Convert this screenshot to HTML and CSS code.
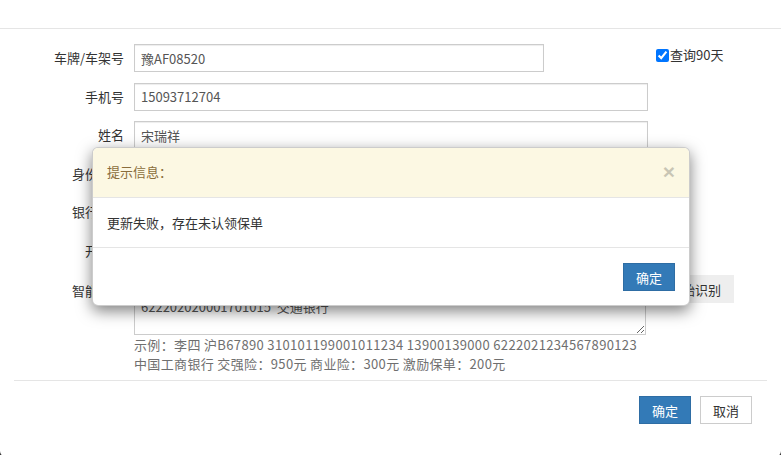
FILE: index.html
```html
<!DOCTYPE html>
<html lang="zh-CN">
<head>
    <meta charset="UTF-8">
    <title>保单信息</title>
    <link rel="stylesheet" href="styles.css">
</head>
<body>
    <div class="page">
        <div class="page-header"></div>

        <div class="page-body">
            <div class="form-row">
                <label class="form-label">车牌/车架号</label>
                <input class="form-input short" type="text" value="豫AF08520">
                <label class="check"><input type="checkbox" checked>查询90天</label>
            </div>
            <div class="form-row">
                <label class="form-label">手机号</label>
                <input class="form-input" type="text" value="15093712704">
            </div>
            <div class="form-row">
                <label class="form-label">姓名</label>
                <input class="form-input" type="text" value="宋瑞祥">
            </div>
            <div class="form-row">
                <label class="form-label">身份证号</label>
                <input class="form-input" type="text" value="410102199008150031">
            </div>
            <div class="form-row">
                <label class="form-label">银行卡号</label>
                <input class="form-input" type="text" value="622202020001701015">
            </div>
            <div class="form-row">
                <label class="form-label">开户行</label>
                <input class="form-input" type="text" value="交通银行">
            </div>
            <div class="form-row last">
                <label class="form-label">智能识别</label>
                <div class="field">
                    <textarea class="form-area">宋瑞祥 豫AF08520 410102199008150031 15093712704
622202020001701015  交通银行</textarea>
                    <p class="help">示例：李四 沪B67890 310101199001011234 13900139000 6222021234567890123<br>中国工商银行 交强险：950元 商业险：300元 激励保单：200元</p>
                </div>
                <button class="btn btn-default btn-recog">开始识别</button>
            </div>
            <div class="divider"></div>
        </div>

        <div class="page-footer">
            <button class="btn btn-primary">确定</button>
            <button class="btn btn-default btn-outline">取消</button>
        </div>
    </div>

    <!-- alert dialog shown over the form -->
    <div class="dialog">
        <div class="dialog-header">
            <span class="dialog-title">提示信息：</span>
            <span class="close">&times;</span>
        </div>
        <div class="dialog-body">更新失败，存在未认领保单</div>
        <div class="dialog-footer">
            <button class="btn btn-primary">确定</button>
        </div>
    </div>
</body>
</html>
```

FILE: styles.css
```css
html {
    background-color: #3a3a3a;
}
body {
    margin: 0;
    font-family: "Noto Sans CJK SC", "Liberation Sans", sans-serif;
    font-size: 13px;
    color: #333;
}
.page {
    background-color: #fff;
    height: 457px;
    border-radius: 0 0 6px 6px;
    overflow: hidden;
}
.page-header {
    height: 28px;
    border-bottom: 1px solid #e5e5e5;
}
.page-body {
    padding: 15px 14px 0;
}
.form-row {
    display: flex;
    align-items: flex-start;
    margin-bottom: 10.5px;
}
.form-row.last {
    margin-bottom: 0;
}
.form-label {
    width: 110px;
    margin-right: 10px;
    text-align: right;
    line-height: 28px;
    flex-shrink: 0;
}
.form-row.last .form-label {
    line-height: 32px;
}
.form-input {
    width: 514px;
    height: 28px;
    box-sizing: border-box;
    padding: 3px 6px;
    border: 1px solid #ccc;
    box-shadow: inset 0 1px 1px rgba(0, 0, 0, .075);
    font-family: inherit;
    font-size: 13px;
    color: #555;
    margin: 0;
}
.form-input.short {
    width: 410px;
}
.check {
    display: flex;
    align-items: center;
    margin-left: 112px;
    margin-top: 2px;
    line-height: 18px;
}
.check input {
    margin: 0 1px 0 0;
    width: 13px;
    height: 13px;
}
.field {
    width: 512px;
}
.form-area {
    display: block;
    width: 512px;
    height: 60px;
    box-sizing: border-box;
    padding: 5px 6px;
    border: 1px solid #ccc;
    font-family: inherit;
    font-size: 13px;
    line-height: 17px;
    color: #555;
    margin: 0;
    resize: vertical;
}
.help {
    margin: 0;
    color: #6f6f6f;
    line-height: 19px;
    letter-spacing: 0.35px;
    white-space: nowrap;
}
.btn {
    font-family: inherit;
    font-size: 13px;
    height: 28px;
    padding: 0 12px;
    border: 1px solid transparent;
    cursor: pointer;
}
.btn-primary {
    background-color: #337ab7;
    border-color: #2e6da4;
    color: #fff;
}
.btn-outline {
    background-color: #fff;
    border-color: #ccc;
    color: #333;
}
.btn-recog {
    margin-left: 10px;
    background-color: #eee;
    border-color: #eee;
    color: #333;
    padding: 0 12px;
}
.divider {
    margin-top: 7px;
    border-top: 1px solid #e5e5e5;
}
.page-footer {
    display: flex;
    justify-content: flex-end;
    gap: 9px;
    padding: 15px 29px 0 0;
}
.dialog {
    position: absolute;
    left: 92px;
    top: 147px;
    width: 598px;
    box-sizing: border-box;
    background-color: #fff;
    border: 1px solid rgba(0, 0, 0, .2);
    border-radius: 6px;
    box-shadow: 0 5px 15px rgba(0, 0, 0, .5);
    overflow: hidden;
}
.dialog-header {
    display: flex;
    justify-content: space-between;
    align-items: center;
    padding: 14px 14px 15px;
    line-height: 20px;
    background-color: #fcf8e3;
    border-bottom: 1px solid #e5e5e5;
}
.dialog-title {
    color: #8a6d3b;
}
.close {
    font-family: "Liberation Sans", sans-serif;
    font-size: 21px;
    font-weight: bold;
    color: #000;
    opacity: .2;
    line-height: 20px;
}
.dialog-body {
    padding: 15px 14px;
    line-height: 19px;
    border-bottom: 1px solid #e5e5e5;
}
.dialog-footer {
    display: flex;
    justify-content: flex-end;
    padding: 15px 14px 14px;
}
```
